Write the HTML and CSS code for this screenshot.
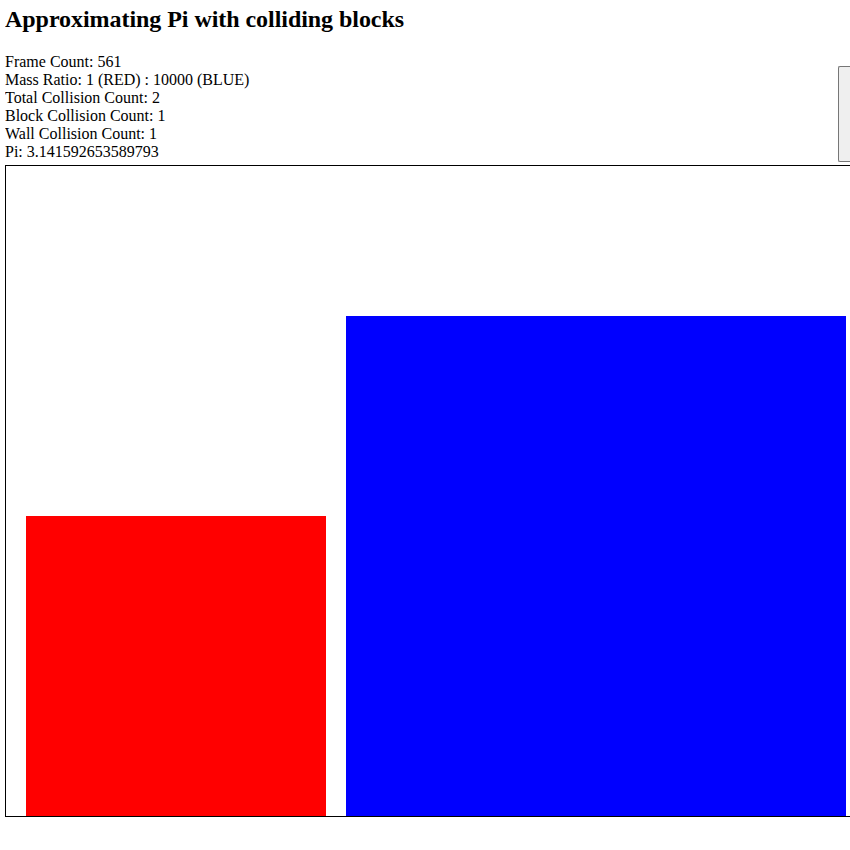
FILE: index.html
```html
<!DOCTYPE html>
<html>
<head>
<meta charset="utf-8">
<title>Approximating Pi with colliding blocks</title>
<link rel="stylesheet" href="styles.css">
</head>
<body>
<h1 class="title">Approximating Pi with colliding blocks</h1>
<div class="info-row">
  <div class="stats">
    <div>Frame Count: 561</div>
    <div>Mass Ratio: 1 (RED) : 10000 (BLUE)</div>
    <div>Total Collision Count: 2</div>
    <div>Block Collision Count: 1</div>
    <div>Wall Collision Count: 1</div>
    <div>Pi: 3.141592653589793</div>
  </div>
  <div class="control-box"></div>
</div>
<div class="stage">
  <div class="block block-red"></div>
  <div class="block block-blue"></div>
</div>
</body>
</html>
```

FILE: styles.css
```css
html {
  overflow: hidden;
}
body {
  margin: 0 0 0 5px;
  font-family: "Liberation Serif", "Times New Roman", serif;
  font-size: 16px;
  color: #000;
  background: #fff;
}
.title {
  font-size: 24px;
  line-height: 28px;
  font-weight: bold;
  margin: 5px 0 20px 0;
  white-space: nowrap;
  letter-spacing: -0.05px;
}
.info-row {
  display: flex;
  align-items: flex-start;
}
.stats {
  flex: 1;
  line-height: 18px;
  white-space: nowrap;
}
.control-box {
  flex: none;
  width: 11px;
  height: 94px;
  margin-top: 13px;
  background: #efefef;
  border: 1px solid #767676;
  border-right: none;
  border-radius: 2px 0 0 2px;
}
.stage {
  margin-top: 3px;
  height: 650px;
  border: 1px solid #000;
  border-right: none;
  display: flex;
  align-items: flex-end;
  gap: 20px;
  padding-left: 20px;
  overflow: hidden;
}
.block {
  flex: none;
}
.block-red {
  width: 300px;
  height: 300px;
  background: #ff0000;
}
.block-blue {
  width: 500px;
  height: 500px;
  background: #0000ff;
}
```
